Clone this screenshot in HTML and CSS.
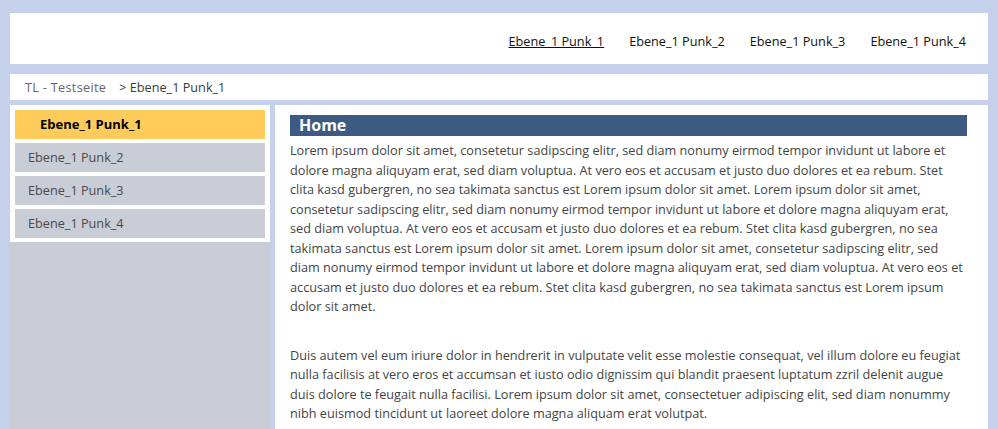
FILE: index.html
```html
<!DOCTYPE html>
<html lang="de">
<head>
<meta charset="utf-8">
<title>TL - Testseite</title>
<link rel="stylesheet" href="styles.css">
</head>
<body>
<div class="page">
  <header class="header">
    <nav class="topnav">
      <a class="topnav__link topnav__link--active" href="#">Ebene_1 Punk_1</a>
      <a class="topnav__link" href="#">Ebene_1 Punk_2</a>
      <a class="topnav__link" href="#">Ebene_1 Punk_3</a>
      <a class="topnav__link" href="#">Ebene_1 Punk_4</a>
    </nav>
  </header>
  <div class="breadcrumb">
    <span class="breadcrumb__home">TL - Testseite</span>
    <span class="breadcrumb__current">&gt; Ebene_1 Punk_1</span>
  </div>
  <div class="main">
    <aside class="sidebar">
      <ul class="sidenav">
        <li class="sidenav__item sidenav__item--active">Ebene_1 Punk_1</li>
        <li class="sidenav__item">Ebene_1 Punk_2</li>
        <li class="sidenav__item">Ebene_1 Punk_3</li>
        <li class="sidenav__item">Ebene_1 Punk_4</li>
      </ul>
    </aside>
    <section class="content">
      <h1 class="content__title">Home</h1>
      <p class="content__text">Lorem ipsum dolor sit amet, consetetur sadipscing elitr, sed diam nonumy eirmod tempor invidunt ut labore et dolore magna aliquyam erat, sed diam voluptua. At vero eos et accusam et justo duo dolores et ea rebum. Stet clita kasd gubergren, no sea takimata sanctus est Lorem ipsum dolor sit amet. Lorem ipsum dolor sit amet, consetetur sadipscing elitr, sed diam nonumy eirmod tempor invidunt ut labore et dolore magna aliquyam erat, sed diam voluptua. At vero eos et accusam et justo duo dolores et ea rebum. Stet clita kasd gubergren, no sea takimata sanctus est Lorem ipsum dolor sit amet. Lorem ipsum dolor sit amet, consetetur sadipscing elitr, sed diam nonumy eirmod tempor invidunt ut labore et dolore magna aliquyam erat, sed diam voluptua. At vero eos et accusam et justo duo dolores et ea rebum. Stet clita kasd gubergren, no sea takimata sanctus est Lorem ipsum dolor sit amet.</p>
      <p class="content__text content__text--spaced">Duis autem vel eum iriure dolor in hendrerit in vulputate velit esse molestie consequat, vel illum dolore eu feugiat nulla facilisis at vero eros et accumsan et iusto odio dignissim qui blandit praesent luptatum zzril delenit augue duis dolore te feugait nulla facilisi. Lorem ipsum dolor sit amet, consectetuer adipiscing elit, sed diam nonummy nibh euismod tincidunt ut laoreet dolore magna aliquam erat volutpat.</p>
    </section>
  </div>
</div>
</body>
</html>
```
FILE: styles.css
```css
html, body {
  margin: 0;
  padding: 0;
  height: 100%;
}
body {
  background: #c5d0ea;
  font-family: "Open Sans", "DejaVu Sans", sans-serif;
  font-size: 12.7px;
  color: #444444;
  overflow: hidden;
}
.page {
  padding: 13px 10px 0 10px;
  display: flex;
  flex-direction: column;
  height: 100%;
  box-sizing: border-box;
}
.header {
  background: #ffffff;
  height: 51px;
  display: flex;
  justify-content: flex-end;
  align-items: center;
  padding-right: 22px;
}
.topnav {
  display: flex;
  gap: 25px;
  padding-top: 4px;
}
.topnav__link {
  color: #111111;
  text-decoration: none;
}
.topnav__link--active {
  text-decoration: underline;
}
.breadcrumb {
  background: #ffffff;
  height: 26px;
  margin-top: 10px;
  padding-left: 15px;
  display: flex;
  align-items: center;
  gap: 13px;
}
.breadcrumb__home {
  color: #6b6074;
  letter-spacing: 0.3px;
}
.breadcrumb__current {
  color: #3a3a3a;
}
.main {
  margin-top: 5px;
  display: flex;
  gap: 5px;
  flex: 1;
}
.sidebar {
  width: 260px;
  background: #c9cdd6;
  flex: none;
}
.sidenav {
  list-style: none;
  margin: 0;
  padding: 5px 5px 4px 5px;
  background: #ffffff;
  display: flex;
  flex-direction: column;
  gap: 4px;
}
.sidenav__item {
  height: 29px;
  line-height: 29px;
  background: #c9cdd6;
  padding-left: 13px;
  color: #4a4a4a;
}
.sidenav__item--active {
  background: #ffcc5c;
  color: #000000;
  font-weight: bold;
  padding-left: 25px;
  font-size: 13px;
}
.content {
  flex: 1;
  background: #ffffff;
  padding: 10px 21px 0 15px;
}
.content__title {
  margin: 0 0 5px 0;
  background: #3d5a82;
  color: #ffffff;
  font-size: 16px;
  font-weight: bold;
  height: 21px;
  line-height: 21px;
  padding-left: 9px;
}
.content__text {
  margin: 0;
  line-height: 19.5px;
}
.content__text--spaced {
  margin-top: 29px;
}
```
